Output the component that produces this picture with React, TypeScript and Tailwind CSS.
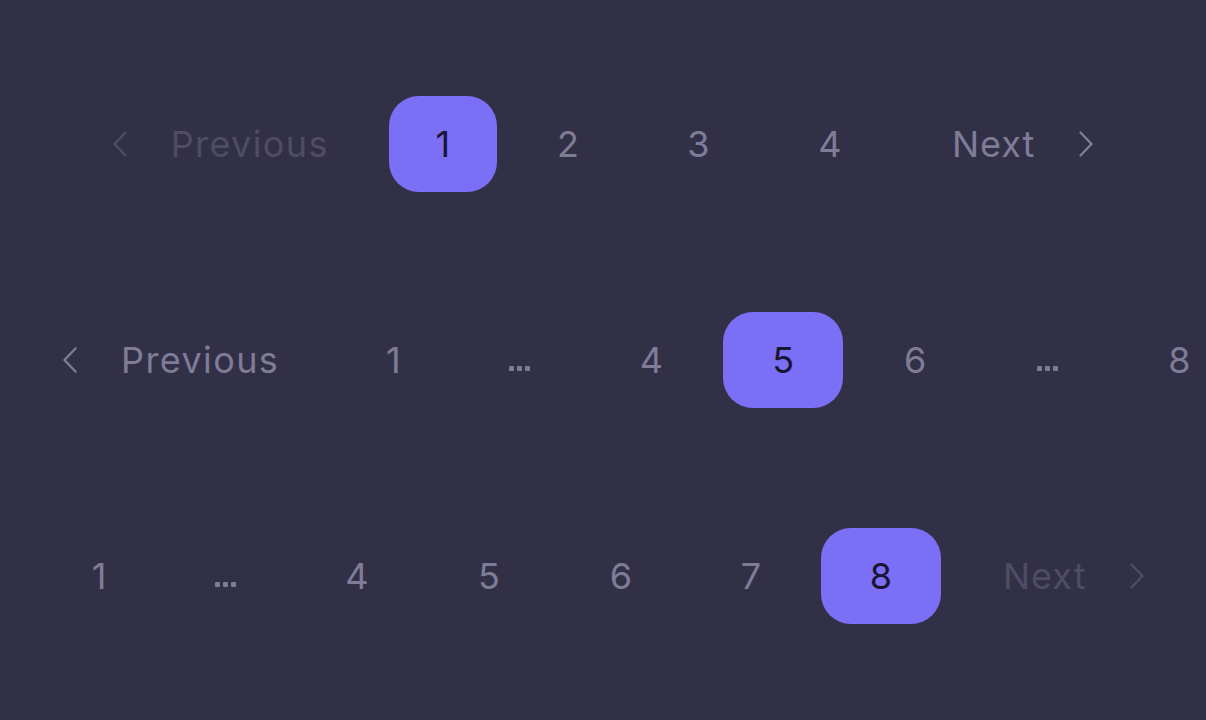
import { ReactNode } from 'react';

type Item =
  | { kind: 'prev' | 'next'; disabled?: boolean }
  | { kind: 'page'; label: string; w: number; active?: boolean }
  | { kind: 'gap'; w: number };

const rows: Item[][] = [
  [
    { kind: 'prev', disabled: true },
    { kind: 'page', label: '1', w: 108, active: true },
    { kind: 'page', label: '2', w: 118 },
    { kind: 'page', label: '3', w: 119 },
    { kind: 'page', label: '4', w: 120 },
    { kind: 'next' },
  ],
  [
    { kind: 'prev' },
    { kind: 'page', label: '1', w: 108 },
    { kind: 'gap', w: 120 },
    { kind: 'page', label: '4', w: 120 },
    { kind: 'page', label: '5', w: 120, active: true },
    { kind: 'page', label: '6', w: 120 },
    { kind: 'gap', w: 120 },
    { kind: 'page', label: '8', w: 120 },
    { kind: 'next' },
  ],
  [
    { kind: 'page', label: '1', w: 108 },
    { kind: 'gap', w: 120 },
    { kind: 'page', label: '4', w: 120 },
    { kind: 'page', label: '5', w: 120 },
    { kind: 'page', label: '6', w: 120 },
    { kind: 'page', label: '7', w: 116 },
    { kind: 'page', label: '8', w: 120, active: true },
    { kind: 'next', disabled: true },
  ],
];

function Chevron({ dir }: { dir: 'left' | 'right' }) {
  return (
    <svg width="16" height="26" viewBox="0 0 16 26" fill="none" className="shrink-0">
      <polyline
        points={dir === 'left' ? '13.5,1.5 2.5,13 13.5,24.5' : '2.5,1.5 13.5,13 2.5,24.5'}
        stroke="currentColor"
        strokeWidth="2.4"
        strokeLinecap="round"
        strokeLinejoin="round"
      />
    </svg>
  );
}

function NavButton({ kind, disabled }: { kind: 'prev' | 'next'; disabled?: boolean }) {
  const color = disabled ? 'text-[#4e4c66]' : 'text-[#7f7c98]';
  return (
    <button
      className={`flex items-center shrink-0 h-[96px] gap-[43px] ${color} ${
        kind === 'prev' ? 'pl-[17px] pr-[48px] tracking-[1.4px]' : 'pl-[50px] pr-[17px] tracking-[1px]'
      }`}
    >
      {kind === 'prev' && <Chevron dir="left" />}
      <span>{kind === 'prev' ? 'Previous' : 'Next'}</span>
      {kind === 'next' && <Chevron dir="right" />}
    </button>
  );
}

function PageButton({ label, w, active }: { label: string; w: number; active?: boolean }) {
  return (
    <button
      style={{ width: w }}
      className={`flex items-center justify-center shrink-0 h-[96px] rounded-[30px] ${
        active ? 'bg-[#7b6ff6] text-[#1a1433]' : 'text-[#7f7c98]'
      }`}
    >
      {label}
    </button>
  );
}

function Dots({ w }: { w: number }) {
  return (
    <div style={{ width: w }} className="flex items-end justify-center gap-[3px] shrink-0 h-[96px] pb-[37px]">
      <span className="w-[5px] h-[5px] bg-[#7f7c98] rounded-[1px]" />
      <span className="w-[5px] h-[5px] bg-[#7f7c98] rounded-[1px]" />
      <span className="w-[5px] h-[5px] bg-[#7f7c98] rounded-[1px]" />
    </div>
  );
}

function renderItem(item: Item, i: number): ReactNode {
  if (item.kind === 'prev' || item.kind === 'next') {
    return <NavButton key={i} kind={item.kind} disabled={item.disabled} />;
  }
  if (item.kind === 'gap') return <Dots key={i} w={item.w} />;
  return <PageButton key={i} label={item.label} w={item.w} active={item.active} />;
}

export default function App() {
  return (
    <div className="w-full h-[720px] overflow-hidden bg-[#323046] font-['Inter',sans-serif] text-[36px] leading-none">
      <div className="flex flex-col gap-[120px] pt-[96px] px-[45px]">
        {rows.map((row, r) => (
          <nav key={r} className="flex items-center gap-[12px] [justify-content:safe_center]">
            {row.map(renderItem)}
          </nav>
        ))}
      </div>
    </div>
  );
}
